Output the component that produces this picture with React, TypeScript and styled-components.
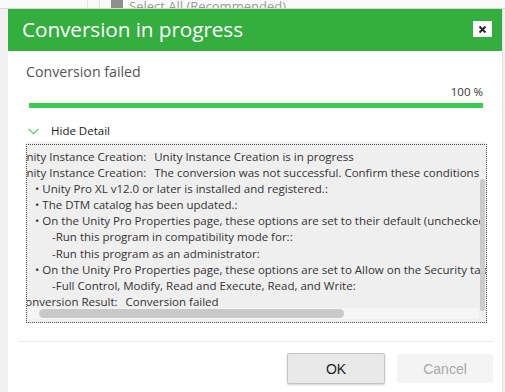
import React from "react";
import styled, { createGlobalStyle } from "styled-components";

const Global = createGlobalStyle`
  html, body { margin: 0; padding: 0; }
  body {
    background: #f1f1f1;
    width: 505px;
    height: 392px;
    overflow: hidden;
    font-family: "Open Sans", "Noto Sans", sans-serif;
  }
`;

const Page = styled.div`
  width: 505px;
  height: 392px;
  display: flex;
  flex-direction: column;
`;

const BackStrip = styled.div`
  height: 8px;
  flex: none;
  background: #fafafa;
  border-bottom: 1px solid #d8d8d8;
  overflow: hidden;
  display: flex;
  align-items: flex-end;
`;

const BackCell = styled.div<{ $w: number }>`
  width: ${(p) => p.$w}px;
  height: 100%;
  flex: none;
  border-right: 1px solid #e2e2e2;
  box-sizing: border-box;
`;

const BackItem = styled.div`
  display: flex;
  align-items: center;
  gap: 6px;
  margin-left: 11px;
  margin-bottom: -6px;
  color: #9a9a9a;
  font-size: 13px;
  line-height: 16px;
  white-space: nowrap;
`;

const BackBox = styled.span`
  width: 12px;
  height: 12px;
  background: #8f8f8f;
  display: inline-block;
`;

const Dialog = styled.div`
  margin-left: 8px;
  width: 495px;
  flex: 1;
  display: flex;
  flex-direction: column;
  background: #ffffff;
  border-right: 1px solid #e3e3e3;
  box-sizing: border-box;
`;

const Header = styled.div`
  height: 42px;
  flex: none;
  background: #34ae3f;
  display: flex;
  align-items: center;
  justify-content: space-between;
  padding: 0 10px 0 14px;
`;

const Title = styled.div`
  color: #ffffff;
  font-size: 20.8px;
  letter-spacing: -0.1px;
  margin-top: -2px;
`;

const CloseBtn = styled.div`
  width: 19px;
  height: 16px;
  background: #ffffff;
  display: flex;
  align-items: center;
  justify-content: center;
  margin-top: -2px;
`;

const Body = styled.div`
  flex: 1;
  display: flex;
  flex-direction: column;
  padding: 10px 16px 0 18px;
`;

const Status = styled.div`
  color: #555555;
  font-size: 14.2px;
  line-height: 22px;
`;

const Percent = styled.div`
  text-align: right;
  color: #333333;
  font-size: 11.5px;
  line-height: 14px;
  margin-top: 2px;
  padding-right: 3px;
`;

const Progress = styled.div`
  height: 5px;
  margin: 4px 3px 0 3px;
  background: #e6e6e6;
`;

const ProgressFill = styled.div`
  height: 100%;
  background: #3ec950;
`;

const Toggle = styled.div`
  display: flex;
  align-items: center;
  gap: 12px;
  margin: 15px 0 0 2px;
  color: #222222;
  font-size: 11.5px;
  line-height: 16px;
`;

const DetailBox = styled.div`
  position: relative;
  margin-top: 3px;
  height: 181px;
  width: 461px;
  background: #efefef;
  padding-top: 2px;
  box-sizing: border-box;
`;

const DetailInner = styled.div`
  height: 100%;
  border: 1px dotted #4a4a4a;
  box-sizing: border-box;
  overflow: hidden;
  padding-top: 4px;
`;

const Lines = styled.div`
  margin-left: -9px;
  white-space: nowrap;
  color: #333333;
  font-size: 11.5px;
  line-height: 16.1px;
  letter-spacing: 0px;
`;

const Line = styled.div<{ $indent: number }>`
  padding-left: ${(p) => p.$indent}px;
`;

const Gap = styled.span`
  display: inline-block;
  width: 8px;
`;

const HTrack = styled.div`
  position: absolute;
  left: 2px;
  bottom: 4px;
  width: 451px;
  height: 11px;
  background: #f6f6f6;
  border-radius: 2px;
`;

const HThumb = styled.div`
  position: absolute;
  left: 11px;
  top: 1px;
  width: 305px;
  height: 9px;
  border-radius: 5px;
  background: #c9c9c9;
`;

const VThumb = styled.div`
  position: absolute;
  right: 2px;
  top: 37px;
  width: 5px;
  height: 132px;
  border-radius: 2px;
  background: #cbcbcb;
`;

const Footer = styled.div`
  margin: 18px -8px 0 -8px;
  border-top: 1px solid #ececec;
  display: flex;
  justify-content: flex-end;
  gap: 12px;
  padding: 11px 1px 0 0;
`;

const Button = styled.div<{ $primary?: boolean }>`
  width: ${(p) => (p.$primary ? 98 : 96)}px;
  height: ${(p) => (p.$primary ? 31 : 29)}px;
  margin-top: ${(p) => (p.$primary ? 0 : 1)}px;
  box-sizing: border-box;
  display: flex;
  align-items: center;
  justify-content: center;
  font-family: "Liberation Sans", Arial, sans-serif;
  font-size: 14px;
  color: ${(p) => (p.$primary ? "#1e1e1e" : "#a8a8a8")};
  background: ${(p) => (p.$primary ? "#e9e9e9" : "#f4f4f4")};
  border: ${(p) => (p.$primary ? "1px solid #c4c4c4" : "none")};
  border-radius: 2px;
  box-shadow: ${(p) => (p.$primary ? "0 1px 2px rgba(0,0,0,0.18)" : "none")};
`;

type DetailLine = { indent: number; parts: string[] };

const detail: DetailLine[] = [
  { indent: 0, parts: ["Unity Instance Creation:", "Unity Instance Creation is in progress"] },
  { indent: 0, parts: ["Unity Instance Creation:", "The conversion was not successful. Confirm these conditions"] },
  { indent: 17, parts: ["• Unity Pro XL v12.0 or later is installed and registered.:"] },
  { indent: 17, parts: ["• The DTM catalog has been updated.:"] },
  { indent: 17, parts: ["• On the Unity Pro Properties page, these options are set to their default (unchecked) values:"] },
  { indent: 34, parts: ["-Run this program in compatibility mode for::"] },
  { indent: 34, parts: ["-Run this program as an administrator:"] },
  { indent: 17, parts: ["• On the Unity Pro Properties page, these options are set to Allow on the Security tab:"] },
  { indent: 34, parts: ["-Full Control, Modify, Read and Execute, Read, and Write:"] },
  { indent: 0, parts: ["Conversion Result:", "Conversion failed"] },
];

export default function App() {
  return (
    <Page>
      <Global />
      <BackStrip>
        <BackCell $w={88} />
        <BackCell $w={12} />
        <BackItem>
          <BackBox />
          Select All (Recommended)
        </BackItem>
      </BackStrip>
      <Dialog>
        <Header>
          <Title>Conversion in progress</Title>
          <CloseBtn>
            <svg width="9" height="9" viewBox="0 0 9 9">
              <path d="M1.5 1.5 L7.5 7.5 M7.5 1.5 L1.5 7.5" stroke="#222" strokeWidth="1.8" />
            </svg>
          </CloseBtn>
        </Header>
        <Body>
          <Status>Conversion failed</Status>
          <Percent>100 %</Percent>
          <Progress>
            <ProgressFill style={{ width: "100%" }} />
          </Progress>
          <Toggle>
            <svg width="11" height="7" viewBox="0 0 11 7">
              <path d="M0.5 0.8 L5.5 5.8 L10.5 0.8" fill="none" stroke="#3ec950" strokeWidth="1.1" />
            </svg>
            Hide Detail
          </Toggle>
          <DetailBox>
            <DetailInner>
              <Lines>
                {detail.map((l, i) => (
                  <Line key={i} $indent={l.indent}>
                    {l.parts[0]}
                    {l.parts[1] && (
                      <>
                        <Gap />
                        {l.parts[1]}
                      </>
                    )}
                  </Line>
                ))}
              </Lines>
            </DetailInner>
            <HTrack>
              <HThumb />
            </HTrack>
            <VThumb />
          </DetailBox>
          <Footer>
            <Button $primary>OK</Button>
            <Button>Cancel</Button>
          </Footer>
        </Body>
      </Dialog>
    </Page>
  );
}
